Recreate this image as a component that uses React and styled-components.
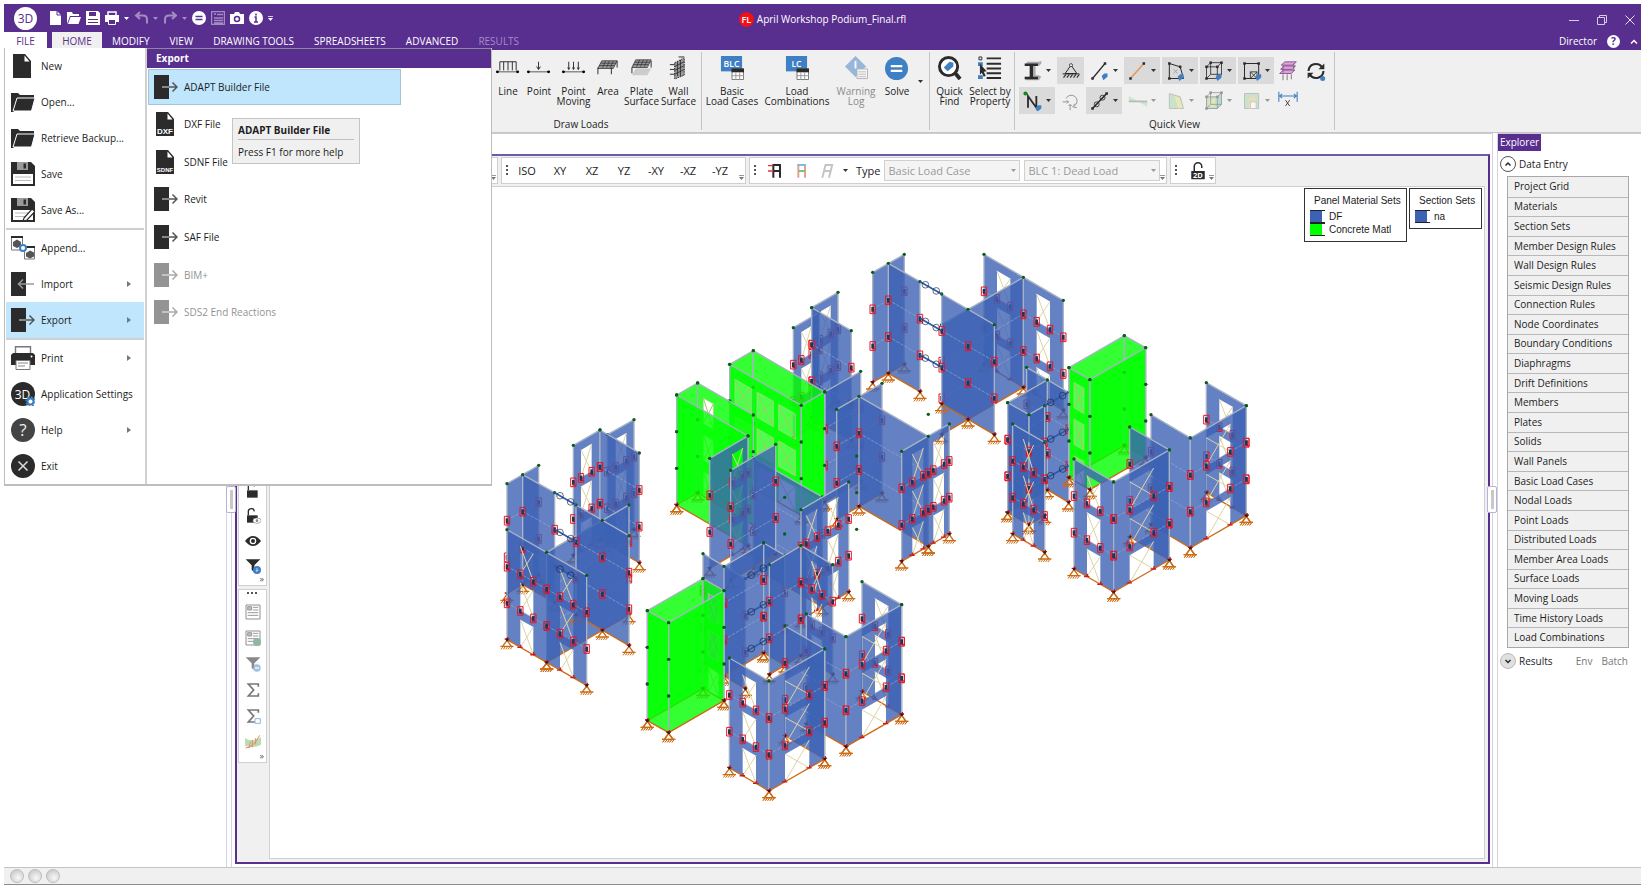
import React from "react";
import styled, { createGlobalStyle } from "styled-components";

const purple = "#582e8f";
const uiFont = '"Open Sans", "Noto Sans", sans-serif';

const GlobalStyle = createGlobalStyle`
  * { box-sizing: border-box; }
  body { margin: 0; background: #fff; font-family: ${uiFont}; font-size: 10px; color: #1c1c1c; }
  button, select, input { font: inherit; color: inherit; }
  button { margin: 0; padding: 0; border: 0; background: none; white-space: nowrap; }
  svg { display: block; flex: none; }
`;

/* ---------- page ---------- */
const Page = styled.div`
  position: relative;
  display: flex;
  flex-direction: column;
  min-height: 100vh;
  padding: 4px 4px 0;
`;
const TitleBar = styled.header`
  display: grid;
  grid-template-columns: 1fr auto 1fr;
  align-items: center;
  height: 28px;
  background: ${purple};
  color: #fff;
`;
const QuickAccess = styled.div`
  display: flex;
  align-items: center;
  gap: 5px;
  padding-left: 10px;
`;
const QuickButton = styled.button`
  display: flex;
  align-items: center;
  opacity: ${(p) => (p.$dim ? 0.45 : 1)};
`;
const AppBadge = styled.span`
  display: grid;
  place-items: center;
  width: 23px;
  height: 23px;
  margin-right: 8px;
  border-radius: 50%;
  background: #fff;
  color: ${purple};
  font-size: 12px;
`;
const DocTitle = styled.div`
  display: flex;
  align-items: center;
  gap: 3px;
  padding-top: 2px;
`;
const DocBadge = styled.span`
  display: grid;
  place-items: center;
  width: 15px;
  height: 15px;
  border-radius: 50%;
  background: #f01018;
  font-size: 9px;
  font-weight: 600;
`;
const WindowButtons = styled.div`
  display: flex;
  justify-content: flex-end;
  gap: 18px;
  padding: 4px 6px 0 0;
`;
const TabRow = styled.nav`
  display: flex;
  align-items: center;
  height: 18px;
  background: ${purple};
`;
const Tab = styled.button`
  height: 18px;
  min-width: ${(p) => p.$min || 0}px;
  margin-right: ${(p) => p.$after || 0}px;
  padding: 0 10px;
  background: ${(p) => p.$bg || "none"};
  color: ${(p) => (p.$bg ? purple : p.$dim ? "#a58cc6" : "#fff")};
`;
const AccountArea = styled.div`
  display: flex;
  align-items: center;
  gap: 10px;
  margin-left: auto;
  padding-right: 3px;
  color: #fff;
`;

/* ---------- ribbon ---------- */
const Ribbon = styled.section`
  display: flex;
  height: 83px;
  padding: 2px 0 2px 457px;
  background: #f0f0f0;
  border-bottom: 1px solid #c6c6c6;
`;
const Group = styled.div`
  display: flex;
  flex-direction: column;
  justify-content: space-between;
  border-right: 1px solid #c4c4c4;
  width: ${(p) => p.$w}px;
`;
const Tools = styled.div`
  display: grid;
  grid-template-columns: ${(p) => p.$cols};
  justify-content: ${(p) => (p.$end ? "end" : "start")};
  padding: 4px ${(p) => (p.$end ? "5px" : "0")} 0 0;
`;
const Tool = styled.button`
  display: flex;
  flex-direction: column;
  align-items: center;
  gap: 6px;
  line-height: 10px;
  white-space: pre;
  opacity: ${(p) => (p.$dim ? 0.5 : 1)};
`;
const GroupName = styled.div`
  text-align: center;
  line-height: 12px;
`;
const QuickGrid = styled.div`
  display: grid;
  grid-template-columns: 36px 27px repeat(5, 36px) 24px 28px;
  gap: 3px 2px;
  padding: 5px 0 0 4px;
`;
const QuickTool = styled.button`
  display: flex;
  align-items: center;
  justify-content: center;
  gap: 3px;
  height: 27px;
  background: ${(p) => (p.$on ? "#dadada" : "none")};
  opacity: ${(p) => (p.$dim ? 0.45 : 1)};
`;

/* ---------- work area ---------- */
const Work = styled.main`
  display: flex;
  flex: 1;
`;
const ProjectPane = styled.aside`
  width: 222px;
`;
const Splitter = styled.div`
  position: relative;
  width: 6px;
  border: solid #d5d2e6;
  border-width: 0 1px;
`;
const Handle = styled.div`
  position: absolute;
  top: 353px;
  left: ${(p) => p.$left}px;
  z-index: 1;
  display: grid;
  place-items: center;
  width: 10px;
  height: 27px;
  border: 1px solid #b9b0d8;
  border-radius: 2px;
  background: #fff;
  &::after { content: ""; width: 3px; height: 19px; background: #c8c8c8; }
`;
const ViewPane = styled.section`
  display: flex;
  flex: 1;
  min-width: 0;
  padding: 20px 2px 3px 3px;
  border-top: 1px solid #ccc;
`;
const Frame = styled.div`
  display: flex;
  flex-direction: column;
  flex: 1;
  min-width: 0;
  border: 2px solid ${purple};
  border-top-color: #6e5aa8;
  background: #f0f0f0;
`;
const BarRow = styled.div`
  display: flex;
  gap: 3px;
  height: 30px;
  padding: 1px 0 2px 1px;
`;
const Bar = styled.div`
  position: relative;
  display: flex;
  align-items: center;
  width: ${(p) => p.$w}px;
  padding-left: 4px;
  background: #fff;
  border: 1px solid #cfcfcf;
  font-size: 11px;
`;
const Overflow = styled.span`
  position: absolute;
  right: 1px;
  bottom: 3px;
`;
const Grip = styled.span`
  width: 2px;
  height: 12px;
  background: repeating-linear-gradient(#555 0 2px, transparent 2px 4px);
`;
const ViewButtons = styled.div`
  display: grid;
  grid-template-columns: 34px repeat(6, 32px);
  padding-left: 2px;
  button { height: 22px; }
`;
const LoadTools = styled.div`
  display: flex;
  align-items: center;
  gap: 9px;
  padding: 0 3px 0 12px;
`;
const PickerLabel = styled.label`
  margin: 0 4px 0 5px;
`;
const Picker = styled.span`
  position: relative;
  margin-right: 4px;
  select {
    appearance: none;
    display: block;
    width: 136px;
    height: 21px;
    padding: 0 3px;
    border: 1px solid #d0d0d0;
    border-radius: 0;
    background: #f4f4f4;
    color: #9a9a9a;
    opacity: 1;
  }
  svg { position: absolute; right: 4px; top: 9px; }
`;
const CanvasRow = styled.div`
  display: flex;
  flex: 1;
  min-height: 0;
  padding: 0 3px 3px 0;
`;
const SideTools = styled.div`
  display: flex;
  flex-direction: column;
  width: 32px;
  gap: 3px;
  padding: 0 2px 0 1px;
`;
const SideStack = styled.div`
  display: flex;
  flex-direction: column;
  align-items: center;
  gap: ${(p) => p.$gap}px;
  padding: ${(p) => p.$top}px 0 1px;
  background: #fff;
  border: 1px solid #cfcfcf;
`;
const SideGrip = styled.span`
  width: 12px;
  height: 2px;
  background: repeating-linear-gradient(90deg, #555 0 2px, transparent 2px 4px);
`;
const SideMore = styled.span`
  align-self: flex-end;
  height: 8px;
  margin: -7px 2px 0 0;
  font-size: 9px;
  line-height: 6px;
  color: #555;
`;
const Canvas = styled.div`
  position: relative;
  flex: 1;
  min-width: 0;
  background: #fff;
  border: 1px solid #cfcfcf;
`;
const Model = styled.svg`
  position: absolute;
  inset: 0;
  width: 100%;
  height: 100%;
`;
const Legends = styled.div`
  position: absolute;
  top: 1px;
  right: 2px;
  display: flex;
  align-items: flex-start;
  gap: 2px;
`;
const Legend = styled.dl`
  width: ${(p) => p.$w}px;
  margin: 0;
  padding: 5px 0 5px 5px;
  border: 1px solid #333;
  background: #fff;
  font: 10px/13px "Liberation Sans", sans-serif;
`;
const LegendTitle = styled.dt`
  padding: 0 0 3px 4px;
`;
const LegendRow = styled.dd`
  display: flex;
  align-items: center;
  gap: 4px;
  margin: 0;
  i {
    width: 15px;
    height: 13px;
    border-top: 1px solid #222;
    border-bottom: 1px solid #222;
    background: linear-gradient(90deg, ${(p) => p.$c} 12px, #fff 12px);
  }
`;

/* ---------- explorer ---------- */
const Explorer = styled.aside`
  width: 143px;
  border-top: 1px solid #ccc;
`;
const ExplorerTitle = styled.h2`
  width: 43px;
  margin: 0;
  background: ${purple};
  color: #fff;
  font-size: 10px;
  font-weight: 400;
  line-height: 17px;
  text-align: center;
`;
const SectionHead = styled.div`
  display: flex;
  align-items: center;
  gap: 3px;
  height: 25px;
  padding: 0 13px 0 2px;
  span { color: #777; }
  span:first-of-type { margin-left: auto; }
  span + span { margin-left: 6px; }
`;
const EntryList = styled.div`
  display: grid;
  grid-auto-rows: 1fr;
  width: 122px;
  height: 472px;
  margin-left: 9px;
  border: 1px solid #a8a8a8;
`;
const Entry = styled.button`
  padding: 0 0 1px 6px;
  text-align: left;
  background: #f0f0f0;
  & + & { border-top: 1px solid #b8b8b8; }
`;
const StatusBar = styled.footer`
  display: flex;
  align-items: center;
  gap: 4px;
  height: 18px;
  padding-left: 6px;
  background: #f0f0f0;
  border-top: 1px solid #c4c4c4;
  border-bottom: 1px solid #8c8c8c;
`;
const Lamp = styled.span`
  width: 14px;
  height: 14px;
  border: 1px solid #bdbdbd;
  border-radius: 50%;
  background: radial-gradient(circle at 60% 65%, #f8f8f8, #bfbfbf);
`;

/* ---------- file menu ---------- */
const FileMenu = styled.div`
  position: absolute;
  top: 48px;
  left: 4px;
  z-index: 5;
  display: flex;
  width: 488px;
  height: 438px;
  background: #fff;
  border: solid #bdbdbd;
  border-width: 0 1px 2px;
`;
const MenuColumn = styled.div`
  width: 140px;
  padding: 0 1px;
`;
const MenuItem = styled.button`
  display: flex;
  align-items: center;
  gap: 6px;
  width: 100%;
  height: 36px;
  padding: 0 13px 0 5px;
  background: ${(p) => (p.$on ? "#bfe6fd" : "none")};
  svg:nth-of-type(2) { margin-left: auto; }
`;
const MenuRule = styled.hr`
  height: 2px;
  margin: 0;
  border: 0;
  background: #cfcfcf;
`;
const SubMenu = styled.div`
  flex: 1;
  border-left: 2px solid #d0d0d0;
`;
const SubTitle = styled.h2`
  margin: 0;
  padding-left: 9px;
  background: ${purple};
  border-top: 1px solid #8c86a0;
  color: #fff;
  font-size: 10px;
  font-weight: 700;
  line-height: 19px;
`;
const SubList = styled.div`
  display: grid;
  grid-auto-rows: 1fr;
  height: 263px;
`;
const SubItem = styled.button`
  display: flex;
  align-items: center;
  gap: 6px;
  width: 253px;
  margin: 1px;
  padding-left: 5px;
  border: 1px solid ${(p) => (p.$on ? "#a8c4d4" : "transparent")};
  background: ${(p) => (p.$on ? "#bfe6fd" : "none")};
  opacity: ${(p) => (p.$dim ? 0.5 : 1)};
`;
const Tip = styled.div`
  position: absolute;
  top: 118px;
  left: 232px;
  z-index: 6;
  width: 128px;
  padding: 2px 5px;
  background: #f0f0f0;
  border: 1px solid #c4c4c4;
  line-height: 17px;
  strong { display: block; font-weight: 700; border-bottom: 1px solid #c0c0c0; margin-bottom: 4px; line-height: 18px; }
`;

/* ---------- icons ---------- */
const K = "#2b2b2b";
const B = "#3f7fc4";
const stroke = { fill: "none", stroke: K, strokeWidth: 1.5 };

function Icon({ size = 24, w, h, box, children }) {
  const W = w || size;
  const H = h || size;
  return (
    <svg width={W} height={H} viewBox={box || "0 0 24 24"} aria-hidden="true">
      {children}
    </svg>
  );
}
const Caret = ({ c = "#333" }) => (
  <svg width="5" height="3" viewBox="0 0 5 3" aria-hidden="true"><path d="M0 0h5L2.500 3z" fill={c} /></svg>
);
const MoreMark = ({ c = "#777" }) => (
  <svg width="5" height="5" viewBox="0 0 6 6" aria-hidden="true"><path d="M0 .5h6" stroke={c} /><path d="M0 2.500h6L3 6z" fill={c} /></svg>
);
const RightMark = () => (
  <svg width="4" height="6" viewBox="0 0 4 6" aria-hidden="true"><path d="M0 0v6l4-3z" fill="#777" /></svg>
);
const tag = (x, y) => <path key="tag" d={`M${x} ${y + 2}l3-3h4v4l-5 4z`} fill={B} />;

const doorOut = <><path d="M0 0h15v24H0z" fill={K} /><path d="M8 12h7" stroke="#aaa" strokeWidth="1.500" /><path d="M15 12h8M18.500 7.500l4.500 4.500-4.500 4.500" {...stroke} stroke="#555" /></>;
const sheet = (t) => <><path d="M2 0h12l6 7v17H2z" fill={K} /><path d="M13.500 1.500v6h5z" fill="#fff" />{t && <text x="11" y="22" fill="#fff" fontFamily="Liberation Sans, sans-serif" fontWeight="700" fontSize={t.length > 3 ? 6 : 8} textAnchor="middle">{t}</text>}</>;
const folder = <><path d="M0 22V3h7l2 2h14v4H6L3 22z" fill={K} /><path d="M6 8h18l-3.500 13H2z" fill={K} stroke="#fff" strokeWidth="1" /></>;
const disk = <><path d="M0 0h20l4 4v20H0z" fill={K} /><path d="M6 0h11v8H6z" fill="#999" /><path d="M12.500 1.500h2.500v5h-2.500z" fill={K} /><path d="M2 12h20v10H2z" fill="#fff" /><path d="M4 15h16M4 18.500h16" stroke="#bbb" /></>;

const menuIcons = {
  New: sheet(),
  Open: folder,
  Save: disk,
  SaveAs: <>{disk}<path d="M13 20l8-9 3 2.500-8 8.500-4 1z" fill="#fff" stroke={K} strokeWidth="1.200" /></>,
  Append: <><path d="M.5 1h11v13H.5zM13.500 11h10v12h-10z" fill="#fff" stroke="#777" /><path d="M0 0h12v2H0zM13 10h11v2H13z" fill={K} /><path d="M2 6l4-2.500 4 2.500v4l-4 2-4-2zM15 17l4-2.500 4 2v4l-4 2-4-2z" fill="#555" /><circle cx="12" cy="12" r="3" fill="#fff" stroke={B} strokeWidth="2" /></>,
  Import: <><path d="M0 0h15v24H0z" fill={K} /><path d="M7 12h16M12 7.500L7.500 12l4.500 4.500" {...stroke} stroke="#999" /></>,
  Export: doorOut,
  Print: <><path d="M4.500 9V.7h15V9" fill="#fff" stroke="#777" strokeWidth="1.400" /><path d="M2 7h20l2 2v10H0V9z" fill={K} /><circle cx="20.500" cy="10.500" r="1" fill="#fff" /><path d="M5 14.500h14v9H5z" fill="#fff" stroke="#777" /><path d="M7 17h10M7 20h7" stroke="#888" /></>,
  Settings: <><circle cx="12" cy="12" r="12" fill={K} /><text x="11.500" y="16.500" fill="#fff" fontSize="12" textAnchor="middle" fontFamily="Open Sans, sans-serif">3D</text><circle cx="19.500" cy="19.500" r="3" fill="#fff" stroke={B} strokeWidth="2" /><circle cx="19.500" cy="19.500" r="4.500" fill="none" stroke={B} strokeWidth="1.500" strokeDasharray="1.800 1.700" /></>,
  Help: <><circle cx="12" cy="12" r="12" fill="#444" /><text x="12" y="18" fill="#eee" fontSize="17" textAnchor="middle" fontFamily="Open Sans, sans-serif">?</text></>,
  Exit: <><circle cx="12" cy="12" r="12" fill={K} /><path d="M7.500 7.500l9 9m0-9l-9 9" stroke="#ddd" strokeWidth="1.500" /></>,
  DXF: sheet("DXF"),
  SDNF: sheet("SDNF"),
};

const hatch = (x, y) => (
  <g stroke="#333" strokeWidth=".8" fill="#999">
    <path d={`M${x} ${y + 9}l4-8h16l-4 8z`} />
    <path d={`M${x + 1} ${y + 6}h16M${x + 3} ${y + 3.500}h16M${x + 5} ${y + 8}l3-7M${x + 9} ${y + 8}l3-7M${x + 13} ${y + 8}l3-7`} />
  </g>
);
const table = (t) => <><path d="M1 0h22v16H1z" fill={B} /><text x="12" y="11" fill="#fff" fontSize="9" fontWeight="600" textAnchor="middle" fontFamily="Open Sans, sans-serif">{t}</text><path d="M12.500 13.500h12v11h-12z" fill="#fff" stroke="#777" /><path d="M12 13h13v4H12z" fill={K} /><path d="M12 20.500h13M16.500 17v8M20.500 17v8" stroke="#999" /></>;

const ribbonIcons = {
  Line: <><path d="M4 15V6h17v9M8 6v9M12.500 6v9M17 6v9" {...stroke} strokeWidth="1" /><path d="M0 16.500h24" stroke="#555" /><circle cx="1.500" cy="16.500" r="1.500" /><circle cx="22.500" cy="16.500" r="1.500" /></>,
  Point: <><path d="M12 6v8M10 11l2 3 2-3" {...stroke} strokeWidth="1" /><path d="M0 16.500h24" stroke="#555" /><circle cx="1.500" cy="16.500" r="1.500" /><circle cx="22.500" cy="16.500" r="1.500" /></>,
  Moving: <><path d="M7 6v8M12 6v8M17 6v8M6 12l1 2 1-2M11 12l1 2 1-2M16 12l1 2 1-2" {...stroke} strokeWidth="1" /><path d="M0 16.500h24" stroke="#555" /><circle cx="1.500" cy="16.500" r="1.500" /><circle cx="22.500" cy="16.500" r="1.500" /></>,
  Area: <>{hatch(2, 4)}<path d="M2 12v7M16 12v7M22 5v7" {...stroke} strokeWidth="1" /></>,
  Plate: <><path d="M2 20l4-7h16l-4 7z" fill="#ccc" />{hatch(2, 3)}<path d="M2 12v6M22 5v7" {...stroke} strokeWidth="1" /></>,
  Wall: <><path d="M8 7l10-5v18L8 24z" fill="#999" stroke={K} strokeDasharray="1.500 1" /><path d="M11 6v15M14 4v17M8 11l10-5M8 15l10-5M8 19l10-5" stroke="#222" strokeWidth=".8" /><path d="M3 9h5M3 14h5M3 19h5M12 1h6" stroke={K} /></>,
  BLC: table("BLC"),
  LC: table("LC"),
  Warning: <><path d="M12 0l11 11-11 11L1 11z" fill={B} /><path d="M12 5v8" stroke="#fff" strokeWidth="2" /><path d="M13.500 13.500h11v10h-11z" fill="#fff" stroke="#777" /><path d="M15 16.500h8M15 19h8M15 21.500h8" stroke="#888" /></>,
  Solve: <><circle cx="12" cy="13" r="12" fill={B} /><path d="M6 10.500h12M6 15.500h12" stroke="#fff" strokeWidth="2.500" /></>,
  Find: <><circle cx="11" cy="11" r="9.500" fill="#fff" stroke={K} strokeWidth="3" /><path d="M18 18l5 6" stroke={K} strokeWidth="4" /><path d="M6 12l6-6 4 1v4l-6 5z" fill={B} /></>,
  Select: <><path d="M9 2.500h15M9 8h15M9 13h15M9 18h15M9 23h15" stroke={K} strokeWidth="2" /><path d="M1 1h3v3H1z" fill="none" stroke={K} /><path d="M0 6.500h5v4H0zM0 20h5v4H0z" fill={B} /><path d="M2 8l7 8-3 .5 2 4-2 1-2-4-2 2z" fill={K} /></>,
};

const frameTag = (inner) => <><path d="M4 3l13 4 4 14H4z" {...stroke} strokeWidth="1.200" />{inner}</>;
const dots = (pts, c = K) => pts.map(([x, y]) => <rect key={`${x}-${y}`} x={x - 1.5} y={y - 1.5} width="3" height="3" fill={c} />);
const cube = <><path d="M3 7h13v14H3zM8 2h13v14M3 7l5-5M16 7l5-5M16 21l5-5M8 2v14h13M3 21l5-5" {...stroke} strokeWidth="1" />{dots([[3, 7], [16, 7], [21, 2], [8, 2], [3, 21]])}</>;
const quickIcons = {
  beam: <><path d="M5 1h14l3-1v3l-3 3h-4v11h4l3 2-3 4H3v-4h6V5H3z" fill="#aaa" /><path d="M2 3h16v3h-6v13h6v3H2v-3h6V6H2z" fill={K} /></>,
  support: <><path d="M12 5L5 15h14zM2 15.500h20" {...stroke} strokeWidth="1.200" /><circle cx="12" cy="5" r="1.800" fill="#fff" stroke={K} /><path d="M3 20l3-4M7 20l3-4M11 20l3-4M15 20l3-4M19 20l3-4" stroke="#333" strokeWidth="1.400" /></>,
  line: <><path d="M3 21L18 3" {...stroke} />{dots([[3, 21], [18, 3]])}{tag(14, 16)}</>,
  member: <><path d="M3 21L19 3" {...stroke} stroke="#e59a5c" strokeWidth="2" />{dots([[3, 21], [19, 3]])}</>,
  plate: <>{frameTag(<path d="M9 10l5 5m0-5l-5 5" stroke="#999" />)}{dots([[4, 3], [17, 7], [4, 21]])}{tag(14, 17)}</>,
  solid: <>{cube}{tag(14, 17)}</>,
  wall: <><path d="M3 3h17v18H3z" {...stroke} strokeWidth="1.200" /><path d="M10 13h8v8h-8zM10 13l8 8m0-8l-8 8" {...stroke} strokeWidth="1" />{dots([[3, 3], [20, 3], [3, 21]])}{tag(16, 17)}</>,
  floors: <g stroke="#8d3a92" fill="#d5a8d8"><path d="M4 5l4-4h14l-4 4zM3 10l4-4h14l-4 4zM2 15l4-4h14l-4 4z" /><path d="M6 16v7M11 16v7M16 16v6M6 5v9M19 3v9" fill="none" stroke="#666" /></g>,
  refresh: <><path d="M3 12a9 9 0 0 1 16-5M21 12a9 9 0 0 1-16 5" {...stroke} strokeWidth="2.500" /><path d="M22 3v7h-7zM2 21v-7h7z" fill={K} /><circle cx="20" cy="21" r="3" fill={B} /></>,
  node: <><circle cx="3" cy="3" r="2.500" fill="#138a13" /><path d="M6 20V6l10 14V6" {...stroke} strokeWidth="2.200" />{tag(15, 18)}</>,
  rotate: <><path d="M6 9a7 7 0 1 1 10 9M19 20l-5-1 3-4M2 13h7M7 11l2 2-2 2M11 23v-7M9 18l2-2 2 2" {...stroke} strokeWidth="1.200" /></>,
  joints: <><path d="M3 21L20 3" {...stroke} strokeWidth="2" /><circle cx="8" cy="16" r="3" {...stroke} strokeWidth="1" /><circle cx="15" cy="8" r="3" {...stroke} strokeWidth="1" />{dots([[3, 21], [20, 3]])}</>,
  diagram: <><path d="M1 6l22 13v-7H1z" fill="#9fd6a4" /><path d="M1 12.500h22" stroke="#777" strokeWidth="2" /></>,
  contour: <><path d="M4 3l13 4 4 14H4z" fill="#9ad39a" stroke="#777" /><path d="M10 6l6 2 4 12-5 1z" fill="#e9dc78" /></>,
  solidContour: <><path d="M3 7h13v14H3z" fill="#9ad39a" /><path d="M16 7l5-5v14l-5 5z" fill="#6ec4c0" /><path d="M6 10h7v8H6z" fill="#d9dc78" />{cube}</>,
  wallContour: <><path d="M3 3h17v18H3z" fill="#9ad39a" stroke="#777" /><path d="M8 21V10l4-4 5 4v11z" fill="#e9c878" /><path d="M10 13h7v8h-7z" fill="#fff" stroke="#888" /></>,
  dimension: <><path d="M1 1v12M23 1v12M2 6h20M5 3.500L2 6l3 2.500M19 3.500L22 6l-3 2.500" fill="none" stroke={B} strokeWidth="1.300" /><path d="M9 11l5 7m0-7l-5 7" stroke={K} /></>,
};
const Q1 = [["beam", 0, 0, 1], ["support", 1, 0, 0], ["line", 0, 0, 1], ["member", 1, 0, 1], ["plate", 1, 0, 1], ["solid", 1, 0, 1], ["wall", 1, 0, 1], ["floors", 0, 0, 0], ["refresh", 0, 0, 0]];
const Q2 = [["node", 1, 0, 1], ["rotate", 0, 1, 0], ["joints", 1, 0, 1], ["diagram", 0, 1, 1], ["contour", 0, 1, 1], ["solidContour", 0, 1, 1], ["wallContour", 0, 1, 1], ["dimension", 0, 0, 0]];

const lockBody = <><path d="M5 11V6a4.500 4.500 0 0 1 9-1" fill="none" stroke={K} strokeWidth="2" /><path d="M3 11h16v11H3z" fill={K} /></>;
const funnel = (c) => <path d="M1 2h22l-9 9v10l-4-3v-7z" fill={c} />;
const report = <><path d="M1.500 1.500h21v21h-21z" fill="#fff" stroke="#888" strokeWidth="1.400" /><path d="M4 4h6v5H4zM12 5h8M12 9h8M4 13h16M4 17h16" fill="#bbb" stroke="#999" strokeWidth="1.500" /></>;
const sigma = <path d="M20 7V3H5l8 9-8 9h15v-4" fill="none" stroke="#777" strokeWidth="2.500" />;
const sideTop = {
  lock: lockBody,
  lockEye: <>{lockBody}<ellipse cx="18" cy="19" rx="6" ry="4" fill="#fff" stroke="#888" /><circle cx="18" cy="19" r="2" fill="#888" /></>,
  eye: <><path d="M0 12q12-15 24 0q-12 15-24 0z" fill={K} /><circle cx="12" cy="12" r="5" fill="#fff" /><circle cx="12" cy="12" r="3" fill={K} /></>,
  filter: <>{funnel(K)}<circle cx="18" cy="18" r="6" fill={B} /><path d="M18 15v5M16 18l2 2 2-2" stroke="#fff" fill="none" /></>,
};
const sideBottom = {
  report,
  reportGlobe: <>{report}<circle cx="18" cy="18" r="6" fill="#8fb8a2" /></>,
  filterOff: <>{funnel("#888")}<circle cx="18" cy="18" r="5.500" fill="#9dc0e4" /><path d="M15 18h6" stroke="#fff" strokeWidth="2" /></>,
  sum: sigma,
  sumBox: <>{sigma}<path d="M15 16h8v7h-8z" fill="#fff" stroke="#8fb5de" strokeWidth="1.500" /></>,
  surface: <><path d="M0 6q11 7 24-1v11q-12 6-24 2z" fill="#b8dfb4" /><path d="M1 21q11 0 21-19M6 21l2-9M11 20V9M16 16V6" fill="none" stroke="#e58a6a" strokeWidth="1.500" /></>,
};

/* ---------- structural model ----------
   A wall is its top edge x1,y1 -> x2,y2 plus the x ranges of its openings.
   Units are thirds of a pixel; every wall is three storeys of 110 high. */
const ST = 110;
const H = 3 * ST;
const blue = "rgb(60,98,180)";
const green = "rgb(0,255,0)";

const clusters = [
  { dx: 1140, dy: -390, walls: [
    [0, 372, 43, 610, 181, [[411, 451], [530, 570]]],
    [0, 38, 97, 133, 43], [0, 85, 70, 180, 125],
    [0, 245, 254, 490, 112], [0, 245, 162, 403, 254],
  ], links: [[180, 125, 245, 162]], joints: [[324, 208]] },
  { dx: 540, dy: -390, walls: [
    [0, 455, 203, 534, 157, [[480, 512]]],
    [0, 400, 263, 478, 217, [[424, 455]]],
    [0, 455, 203, 574, 272],
    [0, 494, 456, 602, 394],
    [0, 530, 508, 666, 430],
    [0, 597, 469, 805, 589],
    [0, 725, 634, 868, 552, [[757, 790], [820, 852]]],
    [1, 209, 373, 280, 332], [1, 280, 332, 494, 456],
    [1, 209, 373, 424, 496, [[225, 274], [291, 340], [356, 406]]],
    [1, 424, 496, 494, 456],
    [1, 50, 465, 113, 429], [1, 113, 429, 280, 525, [[130, 160]]],
    [1, 50, 465, 264, 588],
  ], links: [], joints: [[805, 589]] },
  { dx: 0, dy: 0, walls: [
    [0, 382, 194, 462, 149, [[407, 439]]],
    [0, 280, 226, 360, 180, [[303, 335]]],
    [0, 360, 180, 478, 249],
    [0, 81, 341, 176, 286], [0, 128, 314, 224, 368],
    [0, 200, 547, 447, 405], [0, 288, 405, 447, 497],
    [0, 81, 479, 320, 616, [[121, 160], [240, 280]]],
  ], links: [[224, 368, 288, 405]], joints: [[367, 451], [200, 547]] },
  { dx: 1140, dy: -390, walls: [
    [0, 500, 382, 626, 457],
    [0, 443, 488, 562, 420],
    [0, 443, 488, 507, 524], [0, 507, 524, 554, 497],
    [0, 458, 552, 554, 607, [[490, 521]]],
    [1, 627, 383, 793, 287], [1, 793, 287, 857, 323],
    [1, 627, 383, 690, 419, [[642, 672]]], [1, 690, 419, 857, 323],
    [0, 1039, 428, 1159, 497, [[1078, 1118]]],
    [0, 873, 524, 991, 594],
    [0, 991, 594, 1159, 497, [[1039, 1111]]],
    [0, 809, 561, 928, 630],
    [0, 642, 657, 761, 726, [[681, 721]]],
    [0, 761, 726, 928, 630, [[809, 881]]],
  ], links: [[554, 497, 626, 457]] },
  { dx: 0, dy: 0, walls: [
    [0, 820, 263, 1027, 381],
    [0, 689, 265, 804, 198, [[757, 788]]],
    [0, 752, 301, 887, 223],
    [0, 963, 419, 1106, 336, [[979, 1011], [1043, 1075]]],
    [0, 669, 551, 796, 626],
    [0, 732, 589, 851, 519], [0, 851, 519, 915, 556],
    [0, 868, 584, 963, 527],
    [0, 963, 527, 1058, 584, [[995, 1026]]],
    [1, 502, 722, 669, 626], [1, 669, 626, 732, 662, [[685, 716]]],
    [1, 502, 722, 566, 758], [1, 566, 758, 732, 662],
    [0, 1146, 635, 1265, 704, [[1185, 1225]]],
    [0, 979, 732, 1098, 800],
    [0, 1098, 800, 1265, 704, [[1146, 1218]]],
    [0, 915, 768, 1034, 837],
    [0, 748, 864, 867, 933, [[788, 828]]],
    [0, 867, 933, 1034, 837, [[915, 988]]],
  ], links: [[796, 626, 868, 584]] },
];
const looseNodes = [[1345, 133], [1130, 258], [1130, 368], [1130, 478], [914, 382], [914, 492]];

const Support = ({ x, y }) => (
  <g transform={`translate(${x} ${y})`} fill="none" stroke="#cc6b14" strokeWidth="4">
    <path d="M0 2l-13 18h26zM-20 20h40" />
    <path d="M-18 29l6-8M-11 29l6-8M-4 29l6-8M3 29l6-8M10 29l6-8" strokeWidth="3" />
    <path d="M-7-2H7M2-8V4" stroke="#d01818" />
    <circle r="4" fill="#222" stroke="none" />
  </g>
);
const Release = ({ x, y }) => (
  <g transform={`translate(${x} ${y})`}>
    <path d="M-8-12H8V14H-8z" fill="none" stroke="#ec1420" strokeWidth="3" />
    <path d="M-4-6H4V8H-4z" fill="#2a3050" />
    <path d="M-3 9h9" stroke="#c00" strokeWidth="3" />
  </g>
);
const Node = ({ x, y }) => <circle cx={x} cy={y} r="5" fill="#0c5a1c" />;

function Joint({ x, y, kind }) {
  return (
    <g>
      <Support x={x} y={y + H} />
      {[1, 2].map((s) => kind ? <Node key={s} x={x} y={y + s * ST} /> : <Release key={s} x={x} y={y + s * ST} />)}
      <Node x={x} y={y} />
    </g>
  );
}

function Wall({ data }) {
  const [kind, x1, y1, x2, y2, holes = []] = data;
  const at = (x) => y1 + ((y2 - y1) * (x - x1)) / (x2 - x1);
  const top = kind ? 36 : 27;
  const drop = kind ? 112 : ST;
  const openings = holes.flatMap(([a, b]) =>
    [0, 1, 2].map((s) => {
      const t = s * ST + top;
      const e = Math.min(s * ST + drop, H);
      return [a, at(a) + t, b, at(b) + t, b, at(b) + e, a, at(a) + e];
    })
  );
  const poly = (p) => `M${p[0]} ${p[1]}L${p[2]} ${p[3]}L${p[4]} ${p[5]}L${p[6]} ${p[7]}Z`;
  const outline = poly([x1, y1, x2, y2, x2, y2 + H, x1, y1 + H]);
  return (
    <g>
      <path d={outline + openings.map(poly).join("")} fill={kind ? green : blue} fillOpacity=".8" fillRule="evenodd" />
      {kind === 1 && <path d={openings.map(poly).join("")} fill="#fff" fillOpacity=".12" stroke="#b4d890" strokeWidth="2" />}
      <path d={openings.map((p) => `M${p[0]} ${p[1]}L${p[4]} ${p[5]}M${p[2]} ${p[3]}L${p[6]} ${p[7]}`).join("")} stroke={kind ? "#a8c860" : "#ddd3a4"} strokeWidth="3" fill="none" />
      <path d={`M${x1} ${y1}L${x2} ${y2}V${y2 + H}M${x1} ${y1}V${y1 + H}`} stroke="#a9b3c4" strokeWidth="4" fill="none" />
      {kind === 0 && <path d={`M${x1} ${y1 + ST}L${x2} ${y2 + ST}M${x1} ${y1 + 2 * ST}L${x2} ${y2 + 2 * ST}`} stroke="#9aa9cc" strokeWidth="2" strokeDasharray="10 4" />}
      <path d={`M${x1} ${y1 + H}L${x2} ${y2 + H}`} stroke="#cc6b14" strokeWidth="4" />
      <Joint x={x1} y={y1} kind={kind} />
      <Joint x={x2} y={y2} kind={kind} />
      {kind === 0 && holes.flat().map((x) => (
        <g key={x}>
          <Release x={x} y={at(x) + ST} />
          <Release x={x} y={at(x) + 2 * ST} />
          <path d={`M${x - 9} ${at(x) + H}h16m-6-8v10`} stroke="#d01818" strokeWidth="4" />
        </g>
      ))}
    </g>
  );
}

function Link({ data }) {
  const [x1, y1, x2, y2] = data;
  const p = (t) => [x1 + (x2 - x1) * t, y1 + (y2 - y1) * t];
  return [0, ST, 2 * ST].map((o) => (
    <g key={o} transform={`translate(0 ${o})`} fill="none">
      <path d={`M${x1} ${y1}L${x2} ${y2}`} stroke="#2a5ab0" strokeWidth="5" />
      {[0.25, 0.75].map((t) => <circle key={t} cx={p(t)[0]} cy={p(t)[1]} r="10" stroke="#223" strokeWidth="2" />)}
    </g>
  ));
}

function Building() {
  return (
    <Model viewBox="270 187 1214 671" preserveAspectRatio="xMidYMid meet" role="img" aria-label="Structural model">
      <g transform="translate(480 370) scale(.33333)">
        {clusters.map((c, i) => (
          <g key={i} transform={`translate(${c.dx} ${c.dy})`}>
            {c.walls.map((w, j) => <Wall key={j} data={w} />)}
            {c.links.map((l, j) => <Link key={j} data={l} />)}
            {(c.joints || []).map(([x, y]) => <Joint key={x} x={x} y={y} kind={0} />)}
          </g>
        ))}
        {looseNodes.map(([x, y]) => <Node key={`${x}${y}`} x={x} y={y} />)}
      </g>
    </Model>
  );
}

/* ---------- data ---------- */
const entries = ["Project Grid", "Materials", "Section Sets", "Member Design Rules", "Wall Design Rules", "Seismic Design Rules", "Connection Rules", "Node Coordinates", "Boundary Conditions", "Diaphragms", "Drift Definitions", "Members", "Plates", "Solids", "Wall Panels", "Basic Load Cases", "Nodal Loads", "Point Loads", "Distributed Loads", "Member Area Loads", "Surface Loads", "Moving Loads", "Time History Loads", "Load Combinations"];
const menu = [["New", "New"], ["Open...", "Open"], ["Retrieve Backup...", "Open"], ["Save", "Save"], ["Save As...", "SaveAs"], null, ["Append...", "Append"], ["Import", "Import", 1], ["Export", "Export", 1], null, ["Print", "Print", 1], ["Application Settings", "Settings"], ["Help", "Help", 1], ["Exit", "Exit"]];
const exportsList = [["ADAPT Builder File", "Export"], ["DXF File", "DXF"], ["SDNF File", "SDNF"], ["Revit", "Export"], ["SAF File", "Export"], ["BIM+", "Export", 1], ["SDS2 End Reactions", "Export", 1]];

const RibbonTool = ({ icon, label, dim }) => (
  <Tool $dim={dim}><Icon box="0 0 25 25">{ribbonIcons[icon]}</Icon>{label}</Tool>
);
const quickRow = (row) => row.map(([name, on, dim, drop]) => (
  <QuickTool key={name} $on={on} $dim={dim} aria-label={name}>
    <Icon size={20}>{quickIcons[name]}</Icon>
    {drop ? <Caret /> : null}
  </QuickTool>
));
const W = { fill: "none", stroke: "#fff", strokeWidth: 1.5 };
const frameGlyph = (c1, c2, skew) => <g transform={skew ? "skewX(-14) translate(4 0)" : undefined} fill="none" strokeWidth="3"><path d="M8 22V3h10v19" stroke={c1} /><path d="M8 12h10" stroke={c2} /></g>;

export default function App() {
  return (
    <Page>
      <GlobalStyle />
      <TitleBar>
        <QuickAccess>
          <AppBadge>3D</AppBadge>
          <QuickButton aria-label="New"><Icon w={12} h={14} box="0 0 12 14"><path d="M0 0h7l4 4v10H0z" fill="#fff" /><path d="M7 0v4h4" fill="none" stroke={purple} /></Icon></QuickButton>
          <QuickButton aria-label="Open"><Icon w={14} h={12} box="0 0 14 12"><path d="M0 12V0h5l1 2h6v2H3z" fill="#fff" /><path d="M3.500 5H14l-2.500 7H1z" fill="#fff" /></Icon></QuickButton>
          <QuickButton aria-label="Save"><Icon w={14} h={14} box="0 0 14 14"><path d="M0 0h12l2 2v12H0z" fill="#fff" /><path d="M3 1h7v4H3zM2 8h10v1H2zM2 11h10v1H2z" fill={purple} /></Icon></QuickButton>
          <QuickButton aria-label="Print"><Icon w={14} h={14} box="0 0 14 14"><path d="M3 4V1h8v3" {...W} /><path d="M0 4h14v7H0z" fill="#fff" /><path d="M3.500 8.500h7v5h-7z" fill={purple} stroke="#fff" /></Icon></QuickButton>
          <Caret c="#fff" />
          <QuickButton $dim aria-label="Undo"><Icon size={14} box="2 0 14 14"><path d="M8 1L4 4.500 8 8M4 4.500h7q4 0 4 4v4" {...W} strokeWidth="2" /></Icon></QuickButton>
          <Caret c="#a58cc6" />
          <QuickButton $dim aria-label="Redo"><Icon size={14} box="2 0 14 14"><path d="M11 1l4 3.500L11 8M15 4.500H8q-4 0-4 4v4" {...W} strokeWidth="2" /></Icon></QuickButton>
          <Caret c="#a58cc6" />
          <QuickButton aria-label="Solve"><Icon size={14} box="0 0 14 14"><circle cx="7" cy="7" r="7" fill="#fff" /><path d="M3.500 5.500h7M3.500 8.500h7" stroke={purple} strokeWidth="1.500" /></Icon></QuickButton>
          <QuickButton $dim aria-label="Report"><Icon size={14} box="0 0 14 14"><path d="M.5.5h13v13H.5zM3 3h2M6 3.500h6M3 7h9M3 9.500h9M3 12h9" {...W} /></Icon></QuickButton>
          <QuickButton aria-label="Camera"><Icon w={14} h={12} box="0 0 14 12"><path d="M0 2h4l1-2h4l1 2h4v10H0z" fill="#fff" /><circle cx="7" cy="7" r="2.500" fill="none" stroke={purple} strokeWidth="1.500" /></Icon></QuickButton>
          <QuickButton aria-label="Info"><Icon size={14} box="0 0 14 14"><circle cx="7" cy="7" r="7" fill="#fff" /><path d="M7 2.500v2M5.500 6H7v5M5 11h4" fill="none" stroke={purple} strokeWidth="1.500" /></Icon></QuickButton>
          <MoreMark c="#fff" />
        </QuickAccess>
        <DocTitle><DocBadge>FL</DocBadge>April Workshop Podium_Final.rfl</DocTitle>
        <WindowButtons>
          <button aria-label="Minimize"><Icon size={10} box="0 0 10 10"><path d="M0 5.500h10" stroke="#d8cbe8" /></Icon></button>
          <button aria-label="Restore"><Icon size={10} box="0 0 10 10"><path d="M.5 2.500h7v7h-7zM2.500 2V.5h7v7H8" fill="none" stroke="#d8cbe8" /></Icon></button>
          <button aria-label="Close"><Icon size={10} box="0 0 10 10"><path d="M.5.5l9 9m0-9l-9 9" stroke="#e8e0f2" /></Icon></button>
        </WindowButtons>
      </TitleBar>
      <TabRow>
        <Tab $bg="#fff" $min={43} $after={5}>FILE</Tab>
        <Tab $bg="#f0f0f0" $min={50}>HOME</Tab>
        <Tab>MODIFY</Tab>
        <Tab>VIEW</Tab>
        <Tab>DRAWING TOOLS</Tab>
        <Tab>SPREADSHEETS</Tab>
        <Tab>ADVANCED</Tab>
        <Tab $dim>RESULTS</Tab>
        <AccountArea>
          Director
          <button aria-label="Help"><Icon size={13} box="0 0 24 24"><circle cx="12" cy="12" r="12" fill="#fff" /><text x="12" y="19" fill={purple} fontSize="19" fontWeight="700" textAnchor="middle">?</text></Icon></button>
          <button aria-label="Collapse"><Icon w={8} h={5} box="0 0 8 5"><path d="M1 4.500l3-3 3 3" {...W} /></Icon></button>
        </AccountArea>
      </TabRow>

      <Ribbon>
        <Group $w={241}>
          <Tools $end $cols="34px 28px 41px 28px 39px 35px">
            <RibbonTool icon="Line" label="Line" />
            <RibbonTool icon="Point" label="Point" />
            <RibbonTool icon="Moving" label={"Point\nMoving"} />
            <RibbonTool icon="Area" label="Area" />
            <RibbonTool icon="Plate" label={"Plate\nSurface"} />
            <RibbonTool icon="Wall" label={"Wall\nSurface"} />
          </Tools>
          <GroupName>Draw Loads</GroupName>
        </Group>
        <Group $w={228}>
          <Tools $cols="60px 70px 48px 34px 12px">
            <RibbonTool icon="BLC" label={"Basic\nLoad Cases"} />
            <RibbonTool icon="LC" label={"Load\nCombinations"} />
            <RibbonTool icon="Warning" label={"Warning\nLog"} dim />
            <RibbonTool icon="Solve" label="Solve" />
            <Tool aria-label="Solve options"><Icon w={5} h={30} box="0 0 5 30"><path d="M0 24h5l-2.500 3z" fill="#333" /></Icon></Tool>
          </Tools>
        </Group>
        <Group $w={85}>
          <Tools $cols="39px 42px">
            <RibbonTool icon="Find" label={"Quick\nFind"} />
            <RibbonTool icon="Select" label={"Select by\nProperty"} />
          </Tools>
        </Group>
        <Group $w={320}>
          <QuickGrid>{quickRow(Q1)}{quickRow(Q2)}</QuickGrid>
          <GroupName>Quick View</GroupName>
        </Group>
      </Ribbon>

      <Work>
        <ProjectPane />
        <Splitter><Handle $left={-1} /></Splitter>
        <ViewPane>
          <Frame>
            <BarRow>
              <Bar $w={260}><Overflow><MoreMark /></Overflow></Bar>
              <Bar $w={245}>
                <Grip />
                <ViewButtons>
                  {["ISO", "XY", "XZ", "YZ", "-XY", "-XZ", "-YZ"].map((v) => <button key={v}>{v}</button>)}
                </ViewButtons>
                <Overflow><MoreMark /></Overflow>
              </Bar>
              <Bar $w={418}>
                <Grip />
                <LoadTools>
                  <button aria-label="Loads"><Icon size={16}>{frameGlyph(K, K)}<path d="M0 4h8M0 12h8" stroke="#e03a2a" strokeWidth="2" /></Icon></button>
                  <button aria-label="Colored frame"><Icon size={16}>{frameGlyph("#e8a090", "#7cc47c")}<path d="M6.500 3h13" stroke="#8fb5de" strokeWidth="3" /></Icon></button>
                  <button aria-label="Deflected shape"><Icon size={16}>{frameGlyph("#c4c4c4", "#c4c4c4", true)}</Icon></button>
                  <Caret />
                </LoadTools>
                <PickerLabel htmlFor="load-type">Type</PickerLabel>
                <Picker><select id="load-type" disabled><option>Basic Load Case</option></select><Caret c="#999" /></Picker>
                <Picker><select aria-label="Load case" disabled><option>BLC 1: Dead Load</option></select><Caret c="#999" /></Picker>
                <Overflow><MoreMark /></Overflow>
              </Bar>
              <Bar $w={46}>
                <Grip />
                <LoadTools>
                  <button aria-label="Lock 2D"><Icon size={18}><path d="M7 12V6a5 5 0 0 1 10 0v2" fill="none" stroke={K} strokeWidth="2" /><path d="M3 12h18v11H3z" fill={K} /><text x="12" y="21" fill="#fff" fontSize="10" fontWeight="700" textAnchor="middle">2D</text></Icon></button>
                </LoadTools>
                <Overflow><MoreMark /></Overflow>
              </Bar>
            </BarRow>
            <CanvasRow>
              <SideTools>
                <SideStack $top={296} $gap={9}>
                  {Object.entries(sideTop).map(([n, i]) => <button key={n} aria-label={n}><Icon size={16}>{i}</Icon></button>)}
                  <SideMore>»</SideMore>
                </SideStack>
                <SideStack $top={2} $gap={10}>
                  <SideGrip />
                  {Object.entries(sideBottom).map(([n, i]) => <button key={n} aria-label={n}><Icon size={16}>{i}</Icon></button>)}
                  <SideMore>»</SideMore>
                </SideStack>
              </SideTools>
              <Canvas>
                <Building />
                <Legends>
                  <Legend $w={103}>
                    <LegendTitle>Panel Material Sets</LegendTitle>
                    <LegendRow $c={blue}><i />DF</LegendRow>
                    <LegendRow $c={green}><i />Concrete Matl</LegendRow>
                  </Legend>
                  <Legend $w={73}>
                    <LegendTitle>Section Sets</LegendTitle>
                    <LegendRow $c={blue}><i />na</LegendRow>
                  </Legend>
                </Legends>
              </Canvas>
            </CanvasRow>
          </Frame>
        </ViewPane>
        <Splitter><Handle $left={-6} /></Splitter>
        <Explorer>
          <ExplorerTitle>Explorer</ExplorerTitle>
          <SectionHead>
            <Icon size={16} box="0 0 16 16"><circle cx="8" cy="8" r="7.500" fill="#fff" stroke="#555" /><path d="M5.500 9.500L8 7l2.500 2.500" {...stroke} /></Icon>
            Data Entry
          </SectionHead>
          <EntryList>{entries.map((e) => <Entry key={e}>{e}</Entry>)}</EntryList>
          <SectionHead>
            <Icon size={16} box="0 0 16 16"><circle cx="8" cy="8" r="7.500" fill="#e0e0e0" stroke="#bbb" /><path d="M5.500 7L8 9.500 10.500 7" {...stroke} /></Icon>
            Results
            <span>Env</span>
            <span>Batch</span>
          </SectionHead>
        </Explorer>
      </Work>
      <StatusBar><Lamp /><Lamp /><Lamp /></StatusBar>

      <FileMenu>
        <MenuColumn>
          {menu.map((m, i) => m ? (
            <MenuItem key={m[0]} $on={m[0] === "Export"}>
              <Icon>{menuIcons[m[1]]}</Icon>
              {m[0]}
              {m[2] ? <RightMark /> : null}
            </MenuItem>
          ) : <MenuRule key={i} />)}
        </MenuColumn>
        <SubMenu>
          <SubTitle>Export</SubTitle>
          <SubList>
            {exportsList.map(([t, icon, dim], i) => (
              <SubItem key={t} $on={i === 0} $dim={dim}><Icon>{menuIcons[icon]}</Icon>{t}</SubItem>
            ))}
          </SubList>
        </SubMenu>
      </FileMenu>
      <Tip role="tooltip"><strong>ADAPT Builder File</strong>Press F1 for more help</Tip>
    </Page>
  );
}
